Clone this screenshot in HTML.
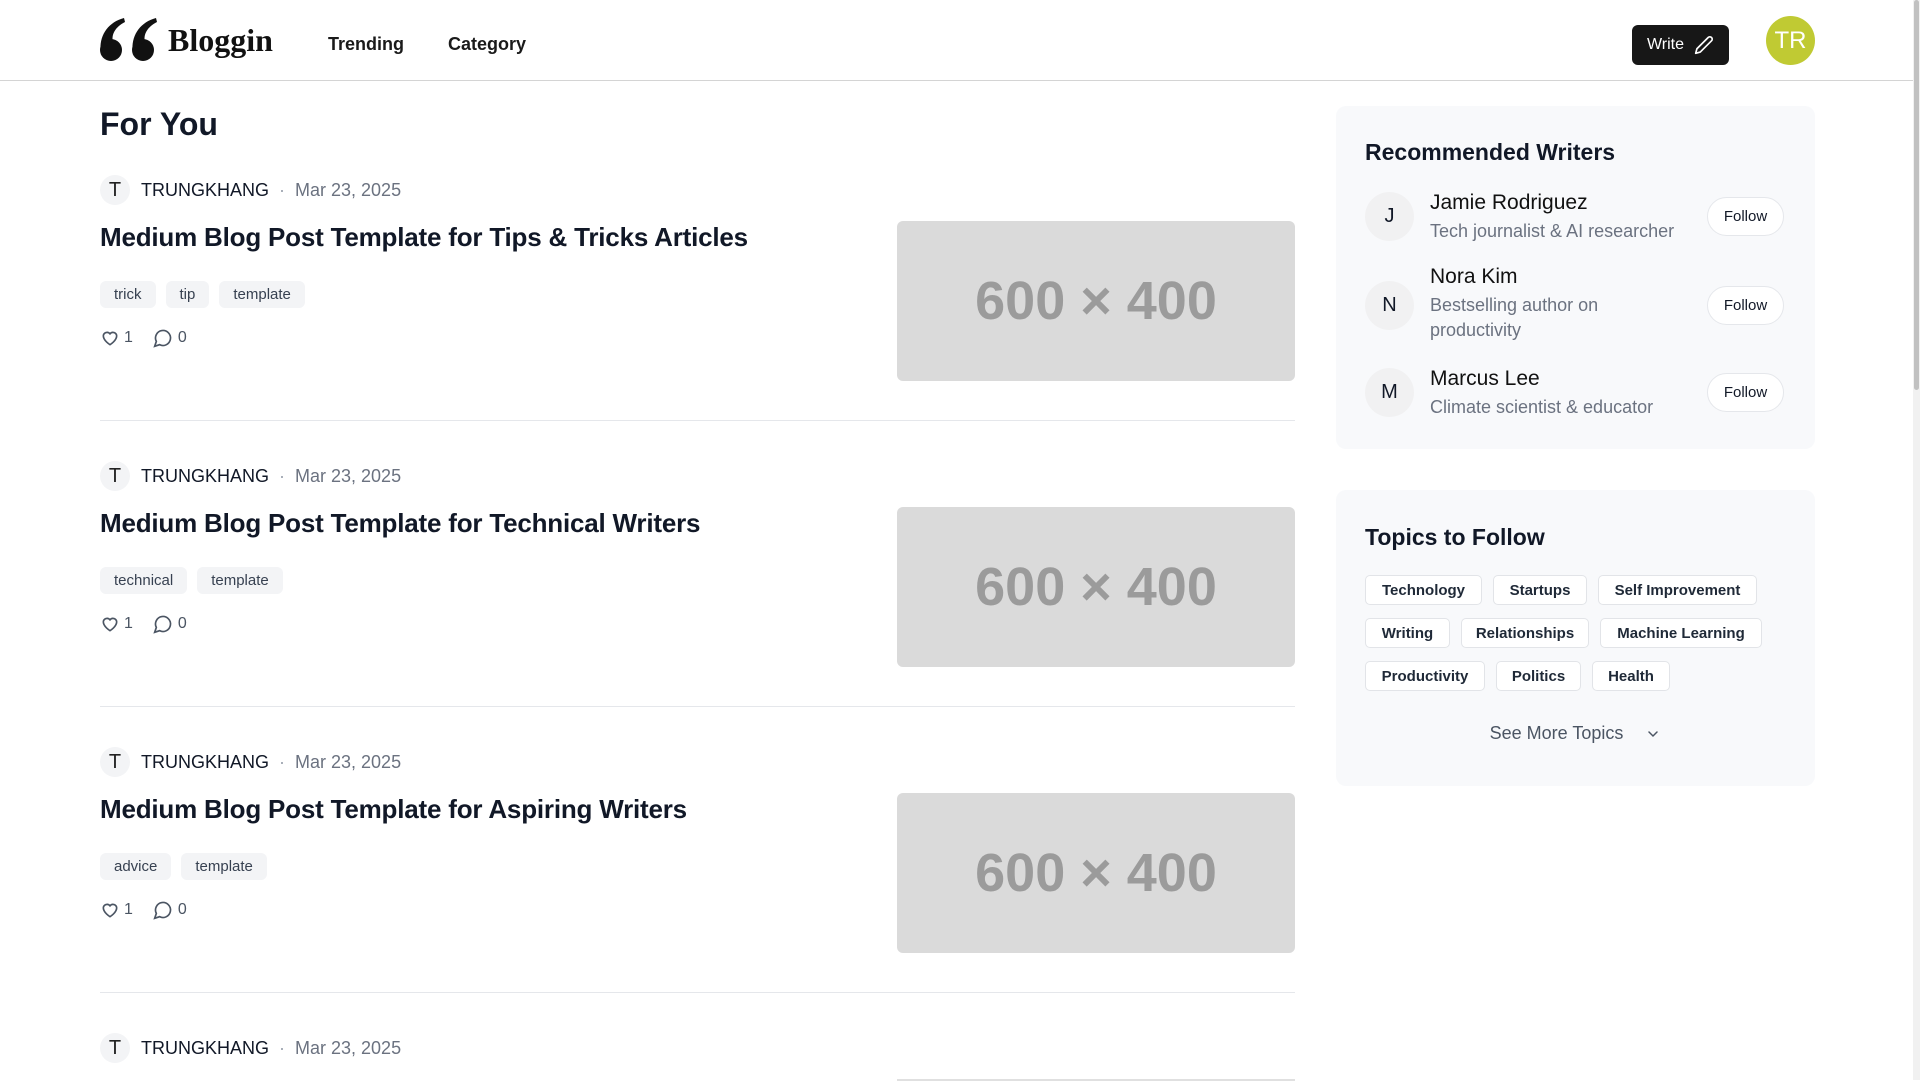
<!DOCTYPE html>
<html><head><meta charset="utf-8"><style>
*{box-sizing:border-box;margin:0;padding:0}
body{width:1920px;height:1080px;overflow:hidden;background:#fff;font-family:"Liberation Sans",sans-serif;color:#111827;position:relative}
.abs{position:absolute}
.hdr{position:absolute;left:0;top:0;width:1913px;height:81px;border-bottom:1.5px solid #d4d4d4}
.nav{position:absolute;top:34px;font-size:18px;font-weight:600;color:#1a1a1a}
.sb{position:absolute;right:0;top:0;width:7px;height:1080px;background:#f1f1f1}
.sb div{position:absolute;left:1px;top:0;width:5px;height:390px;background:#c1c1c1;border-radius:3px}
.post{position:absolute;left:100px;width:1195px}
.meta{position:absolute;left:0;top:0;height:30px;display:flex;align-items:center;font-size:18px}
.av{width:30px;height:30px;border-radius:50%;background:#f3f4f6;display:flex;align-items:center;justify-content:center;font-size:20px;color:#222;margin-right:11px}
.title{position:absolute;left:0;top:47px;font-size:26px;font-weight:700;color:#111827;letter-spacing:-0.2px}
.tags{position:absolute;left:0;top:106px;display:flex;gap:10px}
.tag{height:27px;padding:0 14px;border-radius:6px;background:#f3f4f6;font-size:15px;color:#374151;display:flex;align-items:center}
.stats{position:absolute;left:0;top:153px;display:flex;align-items:center;font-size:16px;color:#4b5563}
.img{position:absolute;left:797px;top:46px;width:398px;height:160px;background:#dadada;border-radius:6px;display:flex;align-items:center;justify-content:center;font-size:54px;color:#9b9b9b;font-weight:600}
.div{position:absolute;left:0;top:245px;width:1195px;height:1px;background:#e5e7eb}
.card{position:absolute;left:1336px;width:479px;background:#f8f9fb;border-radius:10px}
.h3{position:absolute;left:29px;font-size:23px;font-weight:700}
.w{position:absolute;left:29px;width:420px}
.wav{position:absolute;left:0;width:49px;height:49px;border-radius:50%;background:#f1f1f2;display:flex;align-items:center;justify-content:center;font-size:20px}
.wn{position:absolute;left:65px;font-size:21px;color:#111}
.wb{position:absolute;left:65px;font-size:18px;color:#6b7280;line-height:25px;width:260px}
.fb{position:absolute;left:342px;width:77px;height:39px;border-radius:20px;background:#fff;border:1px solid #e5e7eb;font-size:15px;font-weight:500;display:flex;align-items:center;justify-content:center}
.chip{position:absolute;height:30px;background:#fff;border:1px solid #e2e4e8;border-radius:5px;font-size:15px;font-weight:700;color:#1f2937;display:flex;align-items:center;justify-content:center}
</style></head><body>
<div class="hdr"></div>
<svg class="abs" style="left:100px;top:18px" width="58" height="44" viewBox="0 0 58 44">
<g fill="#111"><circle cx="11" cy="32" r="11"/><path d="M0.5 31 C0 16 9 4 24 0 L25 4 C15 9 11 17 13 24 Z"/>
<circle cx="43" cy="32" r="11"/><path d="M32.5 31 C32 16 41 4 56 0 L57 4 C47 9 43 17 45 24 Z"/></g></svg>
<div class="abs" style="left:168px;top:22px;font-family:'Liberation Serif',serif;font-size:32px;font-weight:700;color:#111">Bloggin</div>
<div class="nav" style="left:328px">Trending</div>
<div class="nav" style="left:448px">Category</div>
<div class="abs" style="left:1632px;top:25px;width:97px;height:40px;background:#171717;border-radius:6px;color:#fff;font-size:16px;display:flex;align-items:center;justify-content:center;gap:10px">Write
<svg width="20" height="20" viewBox="0 0 24 24" fill="none" stroke="#fff" stroke-width="2" stroke-linecap="round" stroke-linejoin="round"><path d="M17 3a2.8 2.8 0 0 1 4 4L7.5 20.5 2 22l1.5-5.5Z"/></svg></div>
<div class="abs" style="left:1766px;top:16px;width:49px;height:49px;border-radius:50%;background:#c0ca33;color:#fff;font-size:24px;display:flex;align-items:center;justify-content:center">TR</div>
<div class="sb"><div></div></div>

<div class="abs" style="left:100px;top:106px;font-size:32px;font-weight:700">For You</div>

<div class="post" style="top:175px">
<div class="meta"><div class="av">T</div><span>TRUNGKHANG</span><span style="color:#9ca3af;margin:0 10px">·</span><span style="color:#6b7280">Mar 23, 2025</span></div>
<div class="title">Medium Blog Post Template for Tips &amp; Tricks Articles</div>
<div class="tags"><div class="tag">trick</div><div class="tag">tip</div><div class="tag">template</div></div>
<div class="stats"><svg width="20" height="20" viewBox="0 0 24 24" fill="none" stroke="#4b5563" stroke-width="2"><path d="M12 20s-8-4.8-8-10.5A4.5 4.5 0 0 1 12 7a4.5 4.5 0 0 1 8 2.5C20 15.2 12 20 12 20z"/></svg><span style="margin:0 20px 0 4px">1</span><svg width="20" height="20" viewBox="0 0 24 24" fill="none" stroke="#4b5563" stroke-width="2"><path d="M7.9 20A9 9 0 1 0 4 16.1L2 22Z"/></svg><span style="margin-left:5px">0</span></div>
<div class="img">600 × 400</div>
<div class="div"></div>
</div>

<div class="post" style="top:461px">
<div class="meta"><div class="av">T</div><span>TRUNGKHANG</span><span style="color:#9ca3af;margin:0 10px">·</span><span style="color:#6b7280">Mar 23, 2025</span></div>
<div class="title">Medium Blog Post Template for Technical Writers</div>
<div class="tags"><div class="tag">technical</div><div class="tag">template</div></div>
<div class="stats"><svg width="20" height="20" viewBox="0 0 24 24" fill="none" stroke="#4b5563" stroke-width="2"><path d="M12 20s-8-4.8-8-10.5A4.5 4.5 0 0 1 12 7a4.5 4.5 0 0 1 8 2.5C20 15.2 12 20 12 20z"/></svg><span style="margin:0 20px 0 4px">1</span><svg width="20" height="20" viewBox="0 0 24 24" fill="none" stroke="#4b5563" stroke-width="2"><path d="M7.9 20A9 9 0 1 0 4 16.1L2 22Z"/></svg><span style="margin-left:5px">0</span></div>
<div class="img">600 × 400</div>
<div class="div"></div>
</div>

<div class="post" style="top:747px">
<div class="meta"><div class="av">T</div><span>TRUNGKHANG</span><span style="color:#9ca3af;margin:0 10px">·</span><span style="color:#6b7280">Mar 23, 2025</span></div>
<div class="title">Medium Blog Post Template for Aspiring Writers</div>
<div class="tags"><div class="tag">advice</div><div class="tag">template</div></div>
<div class="stats"><svg width="20" height="20" viewBox="0 0 24 24" fill="none" stroke="#4b5563" stroke-width="2"><path d="M12 20s-8-4.8-8-10.5A4.5 4.5 0 0 1 12 7a4.5 4.5 0 0 1 8 2.5C20 15.2 12 20 12 20z"/></svg><span style="margin:0 20px 0 4px">1</span><svg width="20" height="20" viewBox="0 0 24 24" fill="none" stroke="#4b5563" stroke-width="2"><path d="M7.9 20A9 9 0 1 0 4 16.1L2 22Z"/></svg><span style="margin-left:5px">0</span></div>
<div class="img">600 × 400</div>
<div class="div"></div>
</div>

<div class="post" style="top:1033px">
<div class="meta"><div class="av">T</div><span>TRUNGKHANG</span><span style="color:#9ca3af;margin:0 10px">·</span><span style="color:#6b7280">Mar 23, 2025</span></div>
<div class="abs" style="left:797px;top:46px;width:398px;height:2px;background:#e0e0e0"></div>
</div>

<div class="card" style="top:106px;height:343px">
<div class="h3" style="top:33px">Recommended Writers</div>
<div class="w" style="top:86px"><div class="wav" style="top:0">J</div><div class="wn" style="top:-1px">Jamie Rodriguez</div><div class="wb" style="top:27px;width:300px">Tech journalist &amp; AI researcher</div><div class="fb" style="top:5px">Follow</div></div>
<div class="w" style="top:175px"><div class="wav" style="top:0">N</div><div class="wn" style="top:-16px">Nora Kim</div><div class="wb" style="top:12px">Bestselling author on productivity</div><div class="fb" style="top:5px">Follow</div></div>
<div class="w" style="top:262px"><div class="wav" style="top:0">M</div><div class="wn" style="top:-1px">Marcus Lee</div><div class="wb" style="top:27px;width:300px">Climate scientist &amp; educator</div><div class="fb" style="top:5px">Follow</div></div>
</div>

<div class="card" style="top:490px;height:296px">
<div class="h3" style="top:34px">Topics to Follow</div>
<div class="chip" style="left:29px;top:85px;width:117px">Technology</div>
<div class="chip" style="left:157px;top:85px;width:94px">Startups</div>
<div class="chip" style="left:262px;top:85px;width:159px">Self Improvement</div>
<div class="chip" style="left:29px;top:128px;width:85px">Writing</div>
<div class="chip" style="left:125px;top:128px;width:128px">Relationships</div>
<div class="chip" style="left:264px;top:128px;width:162px">Machine Learning</div>
<div class="chip" style="left:29px;top:171px;width:120px">Productivity</div>
<div class="chip" style="left:160px;top:171px;width:85px">Politics</div>
<div class="chip" style="left:256px;top:171px;width:78px">Health</div>
<div class="abs" style="left:0;top:233px;width:479px;display:flex;justify-content:center;align-items:center;font-size:18px;color:#4b5563">See More Topics<svg style="margin-left:22px" width="16" height="16" viewBox="0 0 24 24" fill="none" stroke="#4b5563" stroke-width="2.2" stroke-linecap="round"><path d="M6 9l6 6 6-6"/></svg></div>
</div>
</body></html>
